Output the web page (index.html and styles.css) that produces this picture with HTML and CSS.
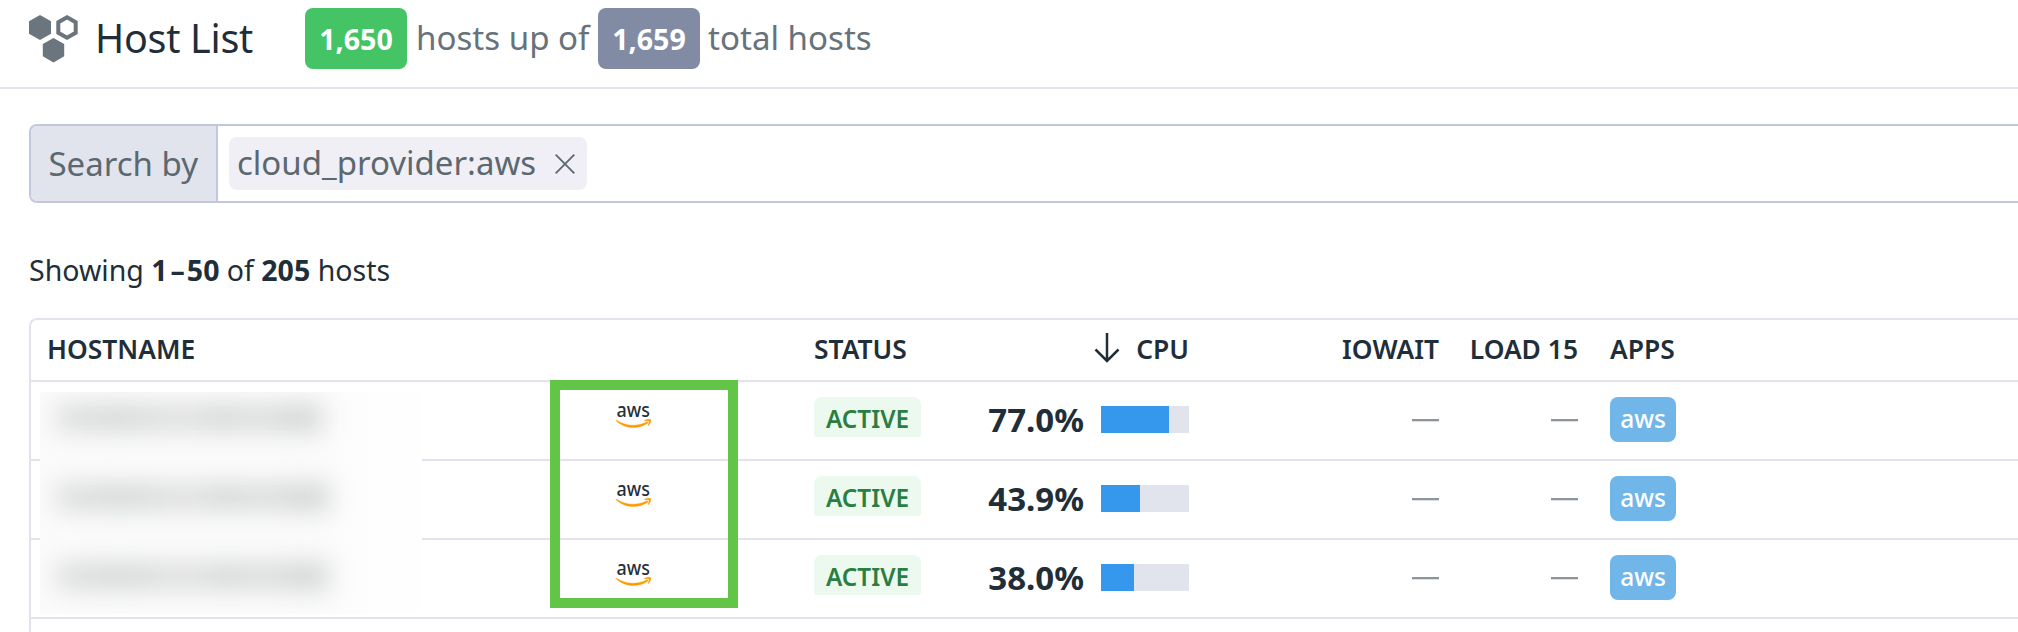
FILE: index.html
```html
<!DOCTYPE html>
<html lang="en">
<head>
<meta charset="utf-8">
<title>Host List</title>
<link rel="stylesheet" href="styles.css">
</head>
<body>
<header class="page-header">
  <svg class="hosts-icon" width="50" height="50" viewBox="0 0 50 50">
    <path d="M11 1l11 6.200v12.600L11 26 0 19.800V7.200zM24.500 24l10.700 6.100v12.200l-10.700 6.100-10.700-6.100V30.100z" fill="#6b757d"/>
    <path d="M38 3.200l8.700 5v10.600l-8.700 5-8.700-5V8.200z" fill="none" stroke="#6b757d" stroke-width="4"/>
  </svg>
  <h1 class="title">Host List</h1>
  <div class="summary">
    <span class="count count-up">1,650</span>
    <span class="words-up">hosts up of</span>
    <span class="count count-total">1,659</span>
    <span class="words-total">total hosts</span>
  </div>
</header>

<main class="content">
  <div class="search">
    <div class="search-label">Search by</div>
    <div class="search-chip">
      <span>cloud_provider:aws</span>
      <svg width="20" height="20" viewBox="0 0 20 20"><path d="M.7.700l18.600 18.600M19.300.7L.7 19.300" stroke="#5c6870" stroke-width="1.800"/></svg>
    </div>
  </div>

  <p class="showing">Showing <b>1<span class="range-dash">–</span>50</b> of <b>205</b> hosts</p>

  <section class="table">
    <div class="row head">
      <div class="host">HOSTNAME</div>
      <div></div>
      <div>STATUS</div>
      <div class="cpu-head">
        <svg width="26" height="30" viewBox="0 0 26 30"><path d="M13 0v28M1.500 16.500L13 28l11.500-11.500" fill="none" stroke="#1f2e38" stroke-width="2.500"/></svg>
        <span>CPU</span>
      </div>
      <div class="right">IOWAIT</div>
      <div class="right">LOAD 15</div>
      <div class="apps">APPS</div>
    </div>
    <div class="row">
      <div></div>
      <div class="cloud">
        <svg width="36" height="36" viewBox="0 -12 36 36">
          <text x="0.6" y="12" textLength="33.4" lengthAdjust="spacingAndGlyphs" class="logo-text">aws</text>
          <path class="smile" d="M.6 15.200c9.500 6.300 20 6.500 30.200 1.800 1-.4 1.700.5.8 1.200C23 24.200 9.500 24.300.4 15.900c-.5-.5-.1-1 .2-.7zM28.700 15.300c2.300-1.500 5.500-1.300 6-.7.5.7-.2 4.200-2.100 5.800-.4.3-.7.100-.5-.3.6-1.300 1.300-3.400.9-4-.4-.5-2.700-.4-4-.2-.5 0-.6-.3-.3-.6z"/>
        </svg>
      </div>
      <div class="status"><span class="badge">ACTIVE</span></div>
      <div class="cpu"><span>77.0%</span><div class="bar"><div class="fill" style="width:77%"></div></div></div>
      <div class="right"><i class="dash"></i></div>
      <div class="right"><i class="dash"></i></div>
      <div class="apps"><span class="app">aws</span></div>
    </div>
    <div class="row">
      <div></div>
      <div class="cloud">
        <svg width="36" height="36" viewBox="0 -12 36 36">
          <text x="0.6" y="12" textLength="33.4" lengthAdjust="spacingAndGlyphs" class="logo-text">aws</text>
          <path class="smile" d="M.6 15.200c9.500 6.300 20 6.500 30.200 1.800 1-.4 1.700.5.8 1.200C23 24.200 9.500 24.300.4 15.900c-.5-.5-.1-1 .2-.7zM28.700 15.300c2.300-1.500 5.500-1.300 6-.7.5.7-.2 4.200-2.100 5.800-.4.3-.7.100-.5-.3.6-1.300 1.300-3.400.9-4-.4-.5-2.700-.4-4-.2-.5 0-.6-.3-.3-.6z"/>
        </svg>
      </div>
      <div class="status"><span class="badge">ACTIVE</span></div>
      <div class="cpu"><span>43.9%</span><div class="bar"><div class="fill" style="width:43.9%"></div></div></div>
      <div class="right"><i class="dash"></i></div>
      <div class="right"><i class="dash"></i></div>
      <div class="apps"><span class="app">aws</span></div>
    </div>
    <div class="row">
      <div></div>
      <div class="cloud">
        <svg width="36" height="36" viewBox="0 -12 36 36">
          <text x="0.6" y="12" textLength="33.4" lengthAdjust="spacingAndGlyphs" class="logo-text">aws</text>
          <path class="smile" d="M.6 15.200c9.500 6.300 20 6.500 30.200 1.800 1-.4 1.700.5.8 1.200C23 24.200 9.500 24.300.4 15.900c-.5-.5-.1-1 .2-.7zM28.700 15.300c2.300-1.500 5.500-1.300 6-.7.5.7-.2 4.200-2.100 5.800-.4.3-.7.100-.5-.3.6-1.300 1.300-3.400.9-4-.4-.5-2.700-.4-4-.2-.5 0-.6-.3-.3-.6z"/>
        </svg>
      </div>
      <div class="status"><span class="badge">ACTIVE</span></div>
      <div class="cpu"><span>38.0%</span><div class="bar"><div class="fill" style="width:38%"></div></div></div>
      <div class="right"><i class="dash"></i></div>
      <div class="right"><i class="dash"></i></div>
      <div class="apps"><span class="app">aws</span></div>
    </div>
    <div class="redaction">
      <div class="smudge s1"></div>
      <div class="smudge s2"></div>
      <div class="smudge s3"></div>
    </div>
    <div class="highlight"></div>
  </section>
</main>
</body>
</html>
```
FILE: styles.css
```css
* { box-sizing: border-box; }
body {
  margin: 0;
  height: 632px;
  overflow: hidden;
  background: #fff;
  color: #1f2e38;
  font-family: "Noto Sans", sans-serif;
}
.logo-text { font-size: 20.500px; fill: #252f3e; font-weight: 500; }
.smile { fill: #f90; stroke: #f90; stroke-width: .4; }

.page-header {
  display: flex;
  align-items: center;
  height: 89px;
  padding: 0 0 12px 29px;
  border-bottom: 2px solid #e1e4ed;
  white-space: nowrap;
}
.hosts-icon { flex: none; margin-top: 2px; }
.title { margin: 0 0 0 16px; width: 210px; font-size: 39.500px; letter-spacing: -.3px; font-weight: 400; line-height: 54px; }
.summary { display: flex; align-items: center; height: 61px; margin-top: 2px; color: #67727a; font-size: 33.100px; line-height: 46px; }
.summary > span:not(.count) { margin-top: -1px; }
.count {
  width: 102px;
  height: 61px;
  border-radius: 8px;
  color: #fff;
  font-size: 28.600px;
  font-weight: 700;
  line-height: 62px;
  text-align: center;
}
.count-up { background: #44c464; }
.count-total { background: #828ba4; }
.words-up { width: 191px; padding-left: 9px; }
.words-total { padding-left: 8px; }

.content { padding: 35px 0 0 29px; }
.search {
  display: flex;
  align-items: center;
  height: 79px;
  border: 2px solid #c3c6df;
  border-right: 0;
  border-radius: 8px 0 0 8px;
  color: #5c6870;
  font-size: 33px;
}
.search-label {
  width: 187px;
  height: 75px;
  padding-left: 17.500px;
  border-right: 2px solid #c3c6df;
  border-radius: 6px 0 0 6px;
  background: #e1e4ed;
  line-height: 76px;
}
.search-chip {
  display: flex;
  align-items: center;
  justify-content: space-between;
  width: 358px;
  height: 53px;
  margin-left: 11px;
  padding: 0 12px 0 8px;
  border-radius: 8px;
  background: #f0eff5;
  line-height: 50px;
}
.search-chip span { margin-top: -2px; }
.showing { margin: 48px 0 0; height: 67px; font-size: 28.500px; line-height: 38px; }
.range-dash { margin: 0 2px 0 3px; }

.table {
  position: relative;
  height: 330px;
  border: solid #e1e4ed;
  border-width: 2px 0 0 2px;
  border-radius: 8px 0 0 0;
}
.row {
  display: grid;
  grid-template-columns: 519px 264px 140px 235px 250px 139px 1fr;
  align-items: center;
  height: 79px;
  border-bottom: 2px solid #e1e4ed;
}
.head { height: 62px; font-size: 26.400px; font-weight: 600; line-height: 36px; padding-bottom: 2px; }
.host { padding-left: 16px; }
.right { display: flex; justify-content: flex-end; }
.cpu-head { display: flex; justify-content: flex-end; gap: 16px; align-items: center; }
.cpu-head svg { margin-top: -3px; }
.apps { padding-left: 32px; }
.cloud { padding-left: 66px; height: 36px; margin-bottom: 19px; }
.cloud svg { display: block; overflow: visible; }
.badge {
  display: block;
  width: 107px;
  height: 40px;
  margin-bottom: 7px;
  border-radius: 8px 8px 3px 3px;
  background: #ebf9ef;
  color: #2a7e41;
  font-size: 24.300px;
  font-weight: 600;
  line-height: 44px;
  text-align: center;
}
.cpu { display: flex; align-items: center; justify-content: flex-end; gap: 17px; padding-bottom: 2px; font-size: 33px; font-weight: 700; line-height: 46px; }
.bar { width: 88px; height: 27px; background: #e1e4ed; }
.fill { height: 100%; background: #3598ec; }
.dash { width: 27px; height: 2px; margin-bottom: 1px; background: #8d959b; box-shadow: 0 1px #dcdfe1; }
.app {
  display: block;
  width: 66px;
  height: 45px;
  margin-bottom: 2px;
  border-radius: 8px;
  background: #70b6e8;
  color: #fff;
  font-size: 24.500px;
  font-weight: 500;
  line-height: 44px;
  text-align: center;
}
/* Hostnames are hidden behind a smudged patch laid over the rows. */
.redaction {
  position: absolute;
  left: 9px;
  top: 72px;
  width: 382px;
  height: 222px;
  padding: 12px 0 0 16px;
  overflow: hidden;
  background: linear-gradient(to right, #fbfbfb 75%, #fefefe 88%);
}
.smudge { height: 28px; margin-bottom: 51px; filter: blur(12px); background: linear-gradient(to right, #dedfdf, #d6d8d8 24%, #e0e1e1 48%, #d6d8d8 62%, #dddede 75%, #d3d5d5 92%); }
.s1 { width: 266px; }
.s2 { width: 273px; }
.s3 { width: 272px; }
.highlight {
  position: absolute;
  left: 519px;
  top: 60px;
  width: 188px;
  height: 228px;
  border: 10px solid #62c547;
}
```
